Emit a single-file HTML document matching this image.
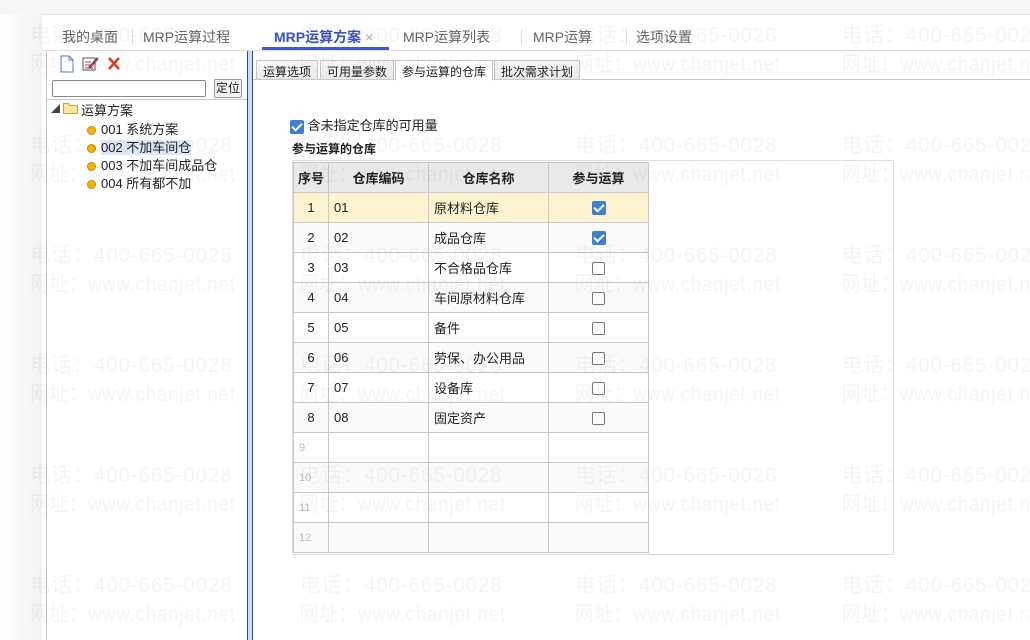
<!DOCTYPE html>
<html><head><meta charset="utf-8"><style>
*{margin:0;padding:0;box-sizing:border-box}
body{width:1030px;height:640px;overflow:hidden;background:#fff;font-family:"Liberation Sans","Noto Sans CJK SC",sans-serif;font-size:13px;color:#222;position:relative}
.abs{position:absolute}
.wm{position:absolute;color:rgba(0,0,0,0.045);font-size:21px;white-space:nowrap;letter-spacing:1px;z-index:50;pointer-events:none;transform-origin:0 0;transform:scaleX(0.97)}
.wm.u{transform:scaleX(0.88)}
.tab{position:absolute;top:27px;font-size:14px;color:#666}
.sep{position:absolute;top:29px;width:1px;height:16px;background:#ddd}
.st{position:absolute;top:60px;height:20px;border:1px solid #c8c8c8;background:linear-gradient(#f8f8f8,#e8e8e8);font-size:12px;padding:2px 6px;color:#222}
table{border-collapse:collapse;position:absolute;left:293px;top:162px}
td,th{border:1px solid #c8c8c8;height:30px;font-size:13px;font-weight:normal;text-align:left;padding-left:5px}
th{background:#e9e9e9;font-weight:bold;text-align:center;padding:0;height:30px}
tr:nth-child(odd) td{background:#fafafa}
.cb{display:inline-block;width:13px;height:13px;border:1px solid #777;border-radius:2px;background:#fff;vertical-align:middle}
.ck{display:inline-block;width:14px;height:14px;border-radius:2px;background:#3d7fd8;vertical-align:middle;position:relative}
.ck:after{content:"";position:absolute;left:4px;top:1px;width:4px;height:8px;border:solid #fff;border-width:0 2px 2px 0;transform:rotate(45deg)}
.dot{display:inline-block;width:9px;height:9px;border-radius:50%;background:#f3b400;border:1px solid #c98a00;margin-right:5px;vertical-align:-1px}
</style></head><body>
<div class="abs" style="left:0;top:0;width:1030px;height:14px;background:#f6f6f6"></div>
<div class="abs" style="left:0;top:14px;width:42px;height:626px;background:linear-gradient(90deg,#fff,#f2f2f2)"></div>
<div class="abs" style="left:42px;top:14px;width:988px;height:1px;background:#e4e4e4"></div>
<div class="tab" style="left:62px">我的桌面</div>
<div class="sep" style="left:132px"></div>
<div class="tab" style="left:143px">MRP运算过程</div>
<div class="tab" style="left:274px;color:#3b4fc6;font-weight:bold">MRP运算方案 <span style="color:#aaa;font-weight:normal">×</span></div>
<div class="abs" style="left:262px;top:47px;width:127px;height:3px;background:#3d58d0"></div>
<div class="tab" style="left:403px">MRP运算列表</div>
<div class="sep" style="left:521px"></div>
<div class="tab" style="left:533px">MRP运算</div>
<div class="sep" style="left:626px"></div>
<div class="tab" style="left:636px">选项设置</div>
<div class="abs" style="left:42px;top:50px;width:988px;height:1px;background:#ddd"></div>
<div class="abs" style="left:46px;top:51px;width:1px;height:589px;background:#ccc"></div>
<svg class="abs" style="left:59px;top:55px" width="70" height="18">
<path d="M2 1h8l4 4v12H2z" fill="#fff" stroke="#5a7bb0"/><path d="M10 1v4h4" fill="none" stroke="#5a7bb0"/>
<rect x="24" y="3" width="12" height="12" fill="#fff" stroke="#556"/><path d="M26 7h6M26 10h5M26 13h8" stroke="#c33"/><path d="M30 12l8-9 1 1-8 9z" fill="#d8a23a" stroke="#735"/>
<path d="M50 3l10 11M60 3L50 14" stroke="#e0391f" stroke-width="2.5"/></svg>
<div class="abs" style="left:52px;top:80px;width:154px;height:17px;border:1px solid #888;border-radius:2px;background:#fff"></div>
<div class="abs" style="left:214px;top:79px;width:28px;height:19px;border:1px solid #999;border-radius:2px;background:#f4f4f4;font-size:12px;text-align:center;line-height:17px">定位</div>
<div class="abs" style="left:47px;top:99px;width:200px;height:1px;background:#ccc"></div>
<div class="abs" style="left:51px;top:102px;font-size:9px;color:#444">◢</div>
<svg class="abs" style="left:63px;top:102px" width="16" height="12"><path d="M0.5 1.5h5l1 2h8v8h-14z" fill="#fbe7a0" stroke="#c9a336"/></svg>
<div class="abs" style="left:81px;top:100px">运算方案</div>
<div class="abs" style="left:87px;top:119px"><span class="dot"></span>001 系统方案</div>
<div class="abs" style="left:87px;top:137px"><span class="dot"></span><span style="background:#dce8f7">002 不加车间仓</span></div>
<div class="abs" style="left:87px;top:155px"><span class="dot"></span>003 不加车间成品仓</div>
<div class="abs" style="left:87px;top:173px"><span class="dot"></span>004 所有都不加</div>
<div class="abs" style="left:247px;top:51px;width:6px;height:589px;background:#c8dcf6;border-left:1px solid #2c4f8c;border-right:1px solid #2c4f8c"></div>
<div class="st" style="left:256px">运算选项</div>
<div class="st" style="left:320px">可用量参数</div>
<div class="st" style="left:395px;background:#fff;border-bottom-color:#fff;height:21px">参与运算的仓库</div>
<div class="st" style="left:494px">批次需求计划</div>
<div class="abs" style="left:253px;top:79px;width:777px;height:1px;background:#c8c8c8;z-index:-1"></div>
<div class="abs" style="left:290px;top:115px"><span class="ck"></span> 含未指定仓库的可用量</div>
<div class="abs" style="left:292px;top:140px;font-weight:bold;font-size:12px">参与运算的仓库</div>
<div class="abs" style="left:292px;top:160px;width:602px;height:395px;border:1px solid #ddd"></div>
<table>
<tr><th style="width:35px">序号</th><th style="width:100px">仓库编码</th><th style="width:120px">仓库名称</th><th style="width:100px">参与运算</th></tr>
<tr><td style="background:#fdf3d0;text-align:center;padding:0">1</td><td style="background:#fdf3d0">01</td><td style="background:#fdf3d0">原材料仓库</td><td style="background:#fdf3d0;text-align:center;padding:0"><span class="ck"></span></td></tr>
<tr><td style="text-align:center;padding:0">2</td><td>02</td><td>成品仓库</td><td style="text-align:center;padding:0"><span class="ck"></span></td></tr>
<tr><td style="text-align:center;padding:0">3</td><td>03</td><td>不合格品仓库</td><td style="text-align:center;padding:0"><span class="cb"></span></td></tr>
<tr><td style="text-align:center;padding:0">4</td><td>04</td><td>车间原材料仓库</td><td style="text-align:center;padding:0"><span class="cb"></span></td></tr>
<tr><td style="text-align:center;padding:0">5</td><td>05</td><td>备件</td><td style="text-align:center;padding:0"><span class="cb"></span></td></tr>
<tr><td style="text-align:center;padding:0">6</td><td>06</td><td>劳保、办公用品</td><td style="text-align:center;padding:0"><span class="cb"></span></td></tr>
<tr><td style="text-align:center;padding:0">7</td><td>07</td><td>设备库</td><td style="text-align:center;padding:0"><span class="cb"></span></td></tr>
<tr><td style="text-align:center;padding:0">8</td><td>08</td><td>固定资产</td><td style="text-align:center;padding:0"><span class="cb"></span></td></tr>
<tr><td style="color:#bbb;font-size:11px">9</td><td></td><td></td><td></td></tr>
<tr><td style="color:#bbb;font-size:11px">10</td><td></td><td></td><td></td></tr>
<tr><td style="color:#bbb;font-size:11px">11</td><td></td><td></td><td></td></tr>
<tr><td style="color:#bbb;font-size:11px">12</td><td></td><td></td><td></td></tr>
</table>
<div class="wm" style="left:30px;top:19px">电话：400-665-0028</div><div class="wm u" style="left:30px;top:48px">网址：www.chanjet.net</div>
<div class="wm" style="left:300px;top:19px">电话：400-665-0028</div><div class="wm u" style="left:300px;top:48px">网址：www.chanjet.net</div>
<div class="wm" style="left:575px;top:19px">电话：400-665-0028</div><div class="wm u" style="left:575px;top:48px">网址：www.chanjet.net</div>
<div class="wm" style="left:842px;top:19px">电话：400-665-0028</div><div class="wm u" style="left:842px;top:48px">网址：www.chanjet.net</div>
<div class="wm" style="left:30px;top:129px">电话：400-665-0028</div><div class="wm u" style="left:30px;top:158px">网址：www.chanjet.net</div>
<div class="wm" style="left:300px;top:129px">电话：400-665-0028</div><div class="wm u" style="left:300px;top:158px">网址：www.chanjet.net</div>
<div class="wm" style="left:575px;top:129px">电话：400-665-0028</div><div class="wm u" style="left:575px;top:158px">网址：www.chanjet.net</div>
<div class="wm" style="left:842px;top:129px">电话：400-665-0028</div><div class="wm u" style="left:842px;top:158px">网址：www.chanjet.net</div>
<div class="wm" style="left:30px;top:239px">电话：400-665-0028</div><div class="wm u" style="left:30px;top:268px">网址：www.chanjet.net</div>
<div class="wm" style="left:300px;top:239px">电话：400-665-0028</div><div class="wm u" style="left:300px;top:268px">网址：www.chanjet.net</div>
<div class="wm" style="left:575px;top:239px">电话：400-665-0028</div><div class="wm u" style="left:575px;top:268px">网址：www.chanjet.net</div>
<div class="wm" style="left:842px;top:239px">电话：400-665-0028</div><div class="wm u" style="left:842px;top:268px">网址：www.chanjet.net</div>
<div class="wm" style="left:30px;top:349px">电话：400-665-0028</div><div class="wm u" style="left:30px;top:378px">网址：www.chanjet.net</div>
<div class="wm" style="left:300px;top:349px">电话：400-665-0028</div><div class="wm u" style="left:300px;top:378px">网址：www.chanjet.net</div>
<div class="wm" style="left:575px;top:349px">电话：400-665-0028</div><div class="wm u" style="left:575px;top:378px">网址：www.chanjet.net</div>
<div class="wm" style="left:842px;top:349px">电话：400-665-0028</div><div class="wm u" style="left:842px;top:378px">网址：www.chanjet.net</div>
<div class="wm" style="left:30px;top:459px">电话：400-665-0028</div><div class="wm u" style="left:30px;top:488px">网址：www.chanjet.net</div>
<div class="wm" style="left:300px;top:459px">电话：400-665-0028</div><div class="wm u" style="left:300px;top:488px">网址：www.chanjet.net</div>
<div class="wm" style="left:575px;top:459px">电话：400-665-0028</div><div class="wm u" style="left:575px;top:488px">网址：www.chanjet.net</div>
<div class="wm" style="left:842px;top:459px">电话：400-665-0028</div><div class="wm u" style="left:842px;top:488px">网址：www.chanjet.net</div>
<div class="wm" style="left:30px;top:569px">电话：400-665-0028</div><div class="wm u" style="left:30px;top:598px">网址：www.chanjet.net</div>
<div class="wm" style="left:300px;top:569px">电话：400-665-0028</div><div class="wm u" style="left:300px;top:598px">网址：www.chanjet.net</div>
<div class="wm" style="left:575px;top:569px">电话：400-665-0028</div><div class="wm u" style="left:575px;top:598px">网址：www.chanjet.net</div>
<div class="wm" style="left:842px;top:569px">电话：400-665-0028</div><div class="wm u" style="left:842px;top:598px">网址：www.chanjet.net</div>
</body></html>
